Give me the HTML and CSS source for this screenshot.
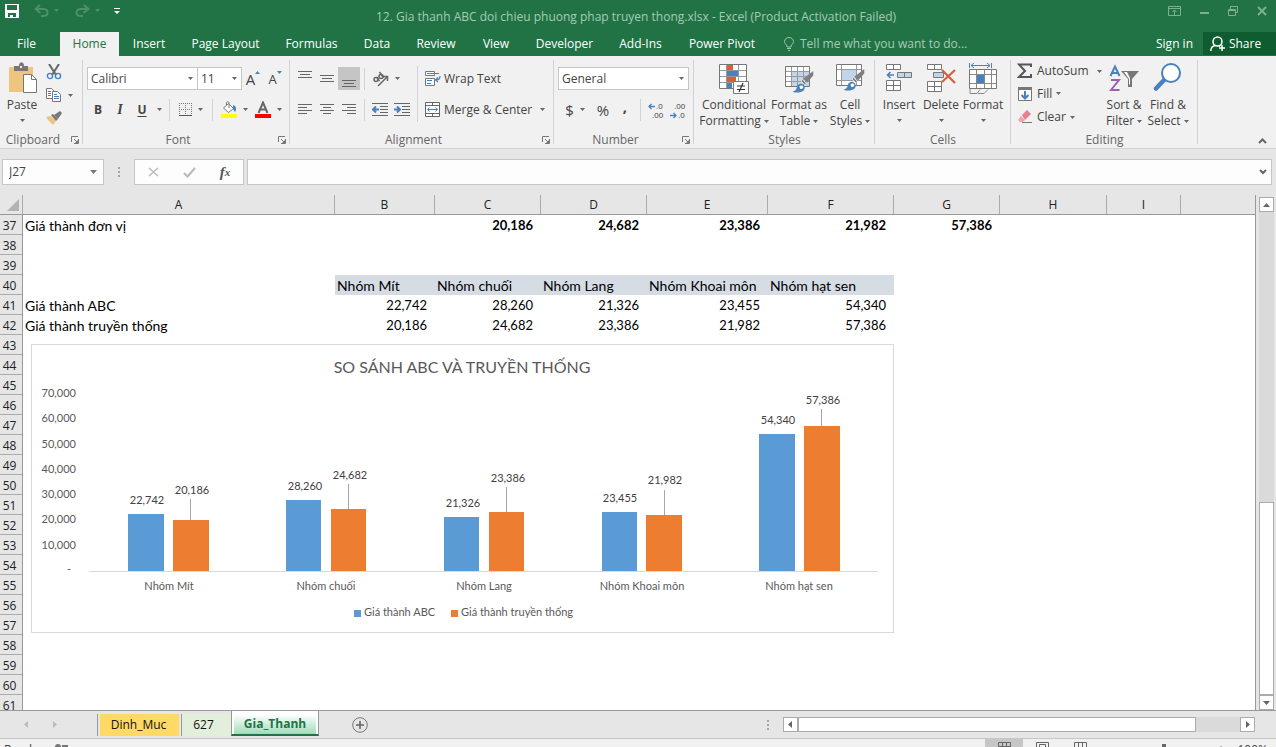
FILE: index.html
```html
<!DOCTYPE html>
<html lang="en">
<head>
<meta charset="utf-8">
<title>12. Gia thanh ABC doi chieu phuong phap truyen thong.xlsx - Excel</title>
<link rel="stylesheet" href="styles.css">
</head>
<body>
<svg class="defs" width="0" height="0" aria-hidden="true">
  <symbol id="caret" viewBox="0 0 5 3"><path d="M0 0h5L2.500 3z" fill="#666"/></symbol>
  <symbol id="launch" viewBox="0 0 8 8"><path d="M.5 6V.5H7M3 3l3 3M7.500 3v4.500H3" fill="none" stroke="#777"/><path d="M7 4v3H4z" fill="#777"/></symbol>
  <symbol id="painter" viewBox="0 0 30 30"><path d="M29 0v6l-8 9-5-5z" fill="#7f7f7f"/><path d="M15 11l5 5-2 2-5-5z" fill="#7f7f7f" stroke="#f1f1f1"/><path d="M2 27c5-1 5-4 6-7s6-5 9-1c3 5-2 9-7 9-3 0-6 0-8-1z" fill="#4a80bb"/><path d="M11 20c2-2 5-1 5 1s-2 3-4 2z" fill="#fff"/></symbol>
</svg>
<div class="app">
  <header class="titlebar">
    <div class="quick">
      <button class="plain" aria-label="Save"><svg width="14" height="14" viewBox="0 0 14 14"><path d="M0 0h14v14H0zM2 1v5h10V1zM3 9v4h2v-2h3v2h3V9z" fill="#fff" fill-rule="evenodd"/></svg></button>
      <button class="plain faded" aria-label="Undo"><svg width="26" height="14" viewBox="0 0 26 14"><path d="M6 1L1.500 5l5 4M2 5h7c6 0 6 7 0 7H7" fill="none" stroke="#4d8f69" stroke-width="2"/><path d="M20 5h5l-2.500 3z" fill="#4d8f69"/></svg></button>
      <button class="plain faded" aria-label="Redo"><svg width="26" height="14" viewBox="0 0 26 14"><path d="M9 1l4.500 4-5 4M13 5H6c-6 0-6 7 0 7h2" fill="none" stroke="#4d8f69" stroke-width="2"/><path d="M20 5h5l-2.500 3z" fill="#4d8f69"/></svg></button>
      <button class="plain" aria-label="Customize"><svg width="6" height="7" viewBox="0 0 6 7"><path d="M0 0h6v1H0zM0 3h6L3 6z" fill="#fff"/></svg></button>
    </div>
    <h1 class="title">12. Gia thanh ABC doi chieu phuong phap truyen thong.xlsx - Excel (Product Activation Failed)</h1>
    <div class="winbtns">
      <button class="plain" aria-label="Ribbon options"><svg width="13" height="10" viewBox="0 0 13 10"><path d="M.5.5h12v9H.5zM1 2.500h11M6.500 4v5M4.500 6l2-2 2 2" fill="none" stroke="#7db091"/></svg></button>
      <button class="plain" aria-label="Minimize"><svg width="9" height="10" viewBox="0 0 9 10"><path d="M0 6h9v2H0z" fill="#7db091"/></svg></button>
      <button class="plain" aria-label="Restore"><svg width="10" height="10" viewBox="0 0 10 10"><path d="M2.500 3V.5h7v6H7M.5 3.500h7v6h-7zM1 4.500h6" fill="none" stroke="#7db091"/></svg></button>
      <button class="plain" aria-label="Close"><svg width="10" height="10" viewBox="0 0 10 10"><path d="M1 1l8 8M9 1L1 9" stroke="#7db091" stroke-width="2"/></svg></button>
    </div>
  </header>

  <nav class="tabs">
    <button class="tab">File</button><button class="tab active">Home</button><button class="tab">Insert</button><button class="tab">Page Layout</button><button class="tab">Formulas</button><button class="tab">Data</button><button class="tab">Review</button><button class="tab">View</button><button class="tab">Developer</button><button class="tab">Add-Ins</button><button class="tab">Power Pivot</button>
    <button class="tell"><svg width="10" height="14" viewBox="0 0 10 14"><path d="M3 10V9C2 7 .5 6.500.5 4.500a4.500 4 0 0 1 9 0C9.500 6.500 8 7 7 9v1zM3 11.500h4M4 13.500h2" fill="none" stroke="#9cc5ab"/></svg>Tell me what you want to do...</button>
    <button class="signin">Sign in</button>
    <button class="share"><svg width="15" height="16" viewBox="0 0 15 16"><circle cx="7.500" cy="5.500" r="4.500" fill="none" stroke="#fff" stroke-width="1.500"/><path d="M.8 15c0-3 2-5 4.500-5.500M9 9.500l1 1M12 9v6M9 12h6" fill="none" stroke="#fff" stroke-width="1.500"/></svg>Share</button>
  </nav>

  <div class="ribbon">
    <section class="group clipboard">
      <div class="body">
        <button class="big"><svg width="30" height="32" viewBox="0 0 30 32"><path d="M2 5h24v25H2z" fill="#eec57f"/><path d="M7 4h5c0-5 5-5 5 0h4v5H7z" fill="#777"/><path d="M13 4h2v2h-2z" fill="#eee"/><path d="M16.500 12.500h8l5 5v13h-13z" fill="#fff" stroke="#777"/><path d="M24.500 12.500v5h5" fill="none" stroke="#777"/></svg><span>Paste</span><svg class="caret low"><use href="#caret"/></svg></button>
        <div class="clipcol">
          <button aria-label="Cut"><svg width="16" height="16" viewBox="0 0 16 16"><path d="M3 0l7 11M13 0L6 11" stroke="#666" stroke-width="2"/><circle cx="4" cy="12" r="2.600" fill="none" stroke="#4a80bb" stroke-width="1.400"/><circle cx="12" cy="12" r="2.600" fill="none" stroke="#4a80bb" stroke-width="1.400"/></svg></button>
          <button aria-label="Copy"><svg width="16" height="14" viewBox="0 0 16 14"><path d="M.5.5h5l3 3v7h-8z" fill="#fff" stroke="#777"/><path d="M2 3.500h3M2 5.500h3M2 7.500h3" stroke="#4a80bb"/><path d="M6.500 3.500h5l3 3v7h-8z" fill="#fff" stroke="#777"/><path d="M8 6.500h3M8 8.500h5M8 10.500h5" stroke="#4a80bb"/></svg><svg class="caret"><use href="#caret"/></svg></button>
          <button aria-label="Format Painter"><svg width="16" height="14" viewBox="0 0 16 14"><path d="M0 6l5-1 5 5-3 4-5-5z" fill="#eec57f"/><path d="M5 4l2-1 5 5-2 2z" fill="#777"/><path d="M8 4l6-4 2 2-4 6z" fill="#777"/></svg></button>
        </div>
      </div>
      <div class="foot"><span>Clipboard</span><button aria-label="Clipboard options"><svg width="8" height="8"><use href="#launch"/></svg></button></div>
    </section>

    <section class="group font">
      <div class="body rows">
        <div class="row">
          <label class="combo name"><select aria-label="Font"><option>Calibri</option></select><svg class="caret"><use href="#caret"/></svg></label>
          <label class="combo size"><select aria-label="Font size"><option>11</option></select><svg class="caret"><use href="#caret"/></svg></label>
          <button class="w22 letter" aria-label="Increase font size">A<svg width="5" height="3" viewBox="0 0 5 3"><path d="M0 3h5L2.500 0z" fill="#4a80bb"/></svg></button>
          <button class="w22 letter small" aria-label="Decrease font size">A<svg width="5" height="3" viewBox="0 0 5 3"><path d="M0 0h5L2.500 3z" fill="#4a80bb"/></svg></button>
        </div>
        <div class="row">
          <button class="w22 b">B</button><button class="w22 i">I</button><button class="w22 u">U</button><button class="w12" aria-label="Underline styles"><svg class="caret"><use href="#caret"/></svg></button>
          <i class="sep"></i>
          <button class="w34" aria-label="Borders"><svg width="13" height="13" viewBox="0 0 13 13"><path d="M.5 0v12M6.500 0v12M12.500 0v12M0 .5h13M0 6.500h13" stroke="#777" stroke-dasharray="1 1"/><path d="M0 12.500h13" stroke="#555"/></svg><svg class="caret"><use href="#caret"/></svg></button>
          <i class="sep"></i>
          <button class="w34" aria-label="Fill color"><svg width="16" height="17" viewBox="0 0 16 17"><path d="M7.500 2.500l5 5-5 4-5-4.500zM5.500 4V1.500C5.500.5 8 .5 8 1.500V7" fill="#fff" stroke="#777"/><path d="M12 4c3 1 4 4 2 7l-2-3z" fill="#4a80bb"/><path d="M0 13h16v4H0z" fill="#ff0"/></svg><svg class="caret"><use href="#caret"/></svg></button>
          <button class="w34" aria-label="Font color"><svg width="16" height="17" viewBox="0 0 16 17"><path d="M3.500 12L8 1.500 12.500 12M5 8.500h6" fill="none" stroke="#666" stroke-width="2"/><path d="M0 13h16v4H0z" fill="#f00"/></svg><svg class="caret"><use href="#caret"/></svg></button>
        </div>
      </div>
      <div class="foot"><span>Font</span><button aria-label="Font options"><svg width="8" height="8"><use href="#launch"/></svg></button></div>
    </section>

    <section class="group align">
      <div class="body">
        <div class="rows">
          <div class="row">
            <button class="w22 top" aria-label="Top align"><svg width="14" height="18" viewBox="0 0 14 18"><path d="M0 1.500h14M2 4.500h10M0 7.500h14" stroke="#666"/></svg></button><button class="w22" aria-label="Middle align"><svg width="14" height="18" viewBox="0 0 14 18"><path d="M0 5.500h14M2 8.500h10M0 11.500h14" stroke="#666"/></svg></button><button class="w22 pressed" aria-label="Bottom align"><svg width="14" height="18" viewBox="0 0 14 18"><path d="M0 10.500h14M2 13.500h10M0 16.500h14" stroke="#666"/></svg></button>
            <i class="sep"></i>
            <button class="w34" aria-label="Orientation"><svg width="17" height="16" viewBox="0 0 17 16"><g fill="none" stroke="#666" stroke-width="1.500"><circle cx="4" cy="8.500" r="2"/><path d="M4.500 6l3 4M7.500 1l4 5.500"/><circle cx="9" cy="5.500" r="2"/><path d="M6 15l9-9M11 5.500h4.500V10"/></g></svg><svg class="caret"><use href="#caret"/></svg></button>
          </div>
          <div class="row">
            <button class="w22" aria-label="Align left"><svg width="14" height="12" viewBox="0 0 14 12"><path d="M0 .5h14M0 3.500h9M0 6.500h14M0 9.500h9" stroke="#666"/></svg></button><button class="w22" aria-label="Center"><svg width="14" height="12" viewBox="0 0 14 12"><path d="M0 .5h14M3 3.500h8M0 6.500h14M3 9.500h8" stroke="#666"/></svg></button><button class="w22" aria-label="Align right"><svg width="14" height="12" viewBox="0 0 14 12"><path d="M0 .5h14M5 3.500h9M0 6.500h14M5 9.500h9" stroke="#666"/></svg></button>
            <i class="sep"></i>
            <button class="w22" aria-label="Decrease indent"><svg width="16" height="13" viewBox="0 0 16 13"><path d="M0 .5h16M8 3.500h8M8 6.500h8M8 9.500h8M0 12.500h16" stroke="#666"/><path d="M7 6.500H1.500M4 3.500l-3 3 3 3" fill="none" stroke="#4a80bb" stroke-width="2"/></svg></button><button class="w22" aria-label="Increase indent"><svg width="16" height="13" viewBox="0 0 16 13"><path d="M0 .5h16M8 3.500h8M8 6.500h8M8 9.500h8M0 12.500h16" stroke="#666"/><path d="M0 6.500h5.500M3 3.500l3 3-3 3" fill="none" stroke="#4a80bb" stroke-width="2"/></svg></button>
          </div>
        </div>
        <i class="sep tall"></i>
        <div class="rows">
          <div class="row"><button class="text"><svg width="16" height="15" viewBox="0 0 16 15"><path d="M.5.500h9v4h-9zM.5 7.500h9v7h-9z" fill="#fff" stroke="#777"/><path d="M2 2.500h12M2 9.500h5M2 12.500h4M15 5c0 3-1 4-4 4M13 6.500L10.500 9l2.500 2" fill="none" stroke="#4a80bb" stroke-width="1.200"/></svg>Wrap Text</button></div>
          <div class="row"><button class="text"><svg width="16" height="15" viewBox="0 0 16 15"><path d="M.5.5h14v14H.5zM0 3.500h15M0 11.500h15M7.500 0v3M7.500 12v3" fill="#fff" stroke="#666"/><path d="M3 7.500h9M4.500 5.500l-2 2 2 2M10.500 5.500l2 2-2 2" fill="none" stroke="#4a80bb"/></svg>Merge &amp; Center<svg class="caret"><use href="#caret"/></svg></button></div>
        </div>
      </div>
      <div class="foot"><span>Alignment</span><button aria-label="Alignment options"><svg width="8" height="8"><use href="#launch"/></svg></button></div>
    </section>

    <section class="group number">
      <div class="body rows">
        <div class="row"><label class="combo format"><select aria-label="Number format"><option>General</option></select><svg class="caret"><use href="#caret"/></svg></label></div>
        <div class="row">
          <button class="w34 sym">$<svg class="caret"><use href="#caret"/></svg></button><button class="w22 sym">%</button><button class="w22 sym comma">,</button>
          <i class="sep"></i>
          <button class="w22" aria-label="Increase decimal"><svg width="18" height="20" viewBox="0 0 18 20"><path d="M8 6.500H2M4.500 4L2 6.500 4.500 9" fill="none" stroke="#4a80bb" stroke-width="1.300"/><text x="9" y="9" class="dec">.0</text><text x="5" y="18" class="dec">.00</text></svg></button><button class="w22" aria-label="Decrease decimal"><svg width="18" height="20" viewBox="0 0 18 20"><path d="M1 15.500h6M4.500 13L7 15.500 4.500 18" fill="none" stroke="#4a80bb" stroke-width="1.300"/><text x="5" y="9" class="dec">.00</text><text x="9" y="18" class="dec">.0</text></svg></button>
        </div>
      </div>
      <div class="foot"><span>Number</span><button aria-label="Number options"><svg width="8" height="8"><use href="#launch"/></svg></button></div>
    </section>

    <section class="group styles">
      <div class="body">
        <button class="big"><svg width="30" height="32" viewBox="0 0 30 32"><path d="M.5 2.500h27v24H.5z" fill="#fff" stroke="#777"/><path d="M7.500 3v23M19.500 3v23M1 8.500h26M1 14.500h26M1 20.500h26" stroke="#999"/><path d="M8 3h6v5H8zM8 15h9v5H8z" fill="#d65f3c"/><path d="M8 9h11v5H8zM8 21h5v5H8z" fill="#4a80bb"/><path d="M14.500 19.500h15v12h-15z" fill="#fff" stroke="#777"/><path d="M18 24h8M18 27.500h8M24 21l-4 9" stroke="#333" stroke-width="1.200"/></svg><span>Conditional<br>Formatting<svg class="caret"><use href="#caret"/></svg></span></button>
        <button class="big"><svg width="30" height="32" viewBox="0 0 30 32"><path d="M1.500 4.500h24v20h-24z" fill="#fff" stroke="#777"/><path d="M8 10h17v14H8z" fill="#c1d4ea"/><path d="M7.500 5v19M13.500 5v19M19.500 5v19M2 9.500h23M2 14.500h23M2 19.500h23" stroke="#999"/><use href="#painter" x="7" y="9" width="23" height="23"/></svg><span>Format as<br>Table<svg class="caret"><use href="#caret"/></svg></span></button>
        <button class="big"><svg width="30" height="32" viewBox="0 0 30 32"><path d="M1.500 2.500h25v21h-25z" fill="#fff" stroke="#777"/><path d="M6.500 3v20M21.500 3v20M2 7.500h24M2 18.500h24" stroke="#999"/><path d="M7 8h14v10H7z" fill="#c1d4ea"/><use href="#painter" x="7" y="7" width="23" height="23"/></svg><span>Cell<br>Styles<svg class="caret"><use href="#caret"/></svg></span></button>
      </div>
      <div class="foot"><span>Styles</span></div>
    </section>

    <section class="group cells">
      <div class="body">
        <button class="big"><svg width="28" height="32" viewBox="0 0 28 32"><path d="M1.500 2.500h14v5h-14zM8.500 2v6M1.500 18.500h14v10h-14zM8.500 18v11M1 23.500h15" fill="#fff" stroke="#777"/><path d="M12.500 10.500h14v5h-14zM19.500 10v6" fill="#c1d4ea" stroke="#777"/><path d="M9 13H3M5.500 10L2.500 13l3 3" fill="none" stroke="#4a80bb" stroke-width="1.600"/></svg><span>Insert</span><svg class="caret low"><use href="#caret"/></svg></button>
        <button class="big"><svg width="30" height="32" viewBox="0 0 30 32"><path d="M1.500 2.500h14v5h-14zM8.500 2v6M1.500 19.500h14v10h-14zM8.500 19v11M1 24.500h15" fill="#fff" stroke="#777"/><path d="M7.500 10.500h10v5h-10z" fill="#c1d4ea" stroke="#777"/><path d="M16 8l13 13M29 8L16 20" stroke="#d65f3c" stroke-width="2.200"/></svg><span>Delete</span><svg class="caret low"><use href="#caret"/></svg></button>
        <button class="big"><svg width="28" height="32" viewBox="0 0 28 32"><path d="M.5 1v5M22.500 1v5M2 3.500h19M5 1L2 3.500 5 6M18 1l3 2.500L18 6" fill="none" stroke="#4a80bb"/><path d="M.5 7.500h27v19H.5z" fill="#fff" stroke="#777"/><path d="M7.500 8v18M15.500 8v18M22.500 8v18M1 12.500h26M1 21.500h26M1 27v4.500h7l3-4 M9 31.500h6l4-4" fill="none" stroke="#888"/><path d="M8 13h7v8H8z" fill="#4a80bb"/></svg><span>Format</span><svg class="caret low"><use href="#caret"/></svg></button>
      </div>
      <div class="foot"><span>Cells</span></div>
    </section>

    <section class="group editing">
      <div class="body">
        <div class="editcol">
          <button class="text"><svg width="16" height="16" viewBox="0 0 16 16"><path d="M14 4V1.500H2L8 8l-6 6h12V11" fill="none" stroke="#555" stroke-width="2"/></svg>AutoSum<svg class="caret far"><use href="#caret"/></svg></button>
          <button class="text"><svg width="16" height="16" viewBox="0 0 16 16"><path d="M1.500 2.500h13v12h-13z" fill="#fff" stroke="#777"/><path d="M1 1h14v3H1z" fill="#777"/><path d="M8 5v8M4.500 9L8 12.500 11.500 9" fill="none" stroke="#4a80bb" stroke-width="2"/></svg>Fill<svg class="caret"><use href="#caret"/></svg></button>
          <button class="text"><svg width="16" height="16" viewBox="0 0 16 16"><path d="M5 6l5-5 4 4-6 6z" fill="#e87f90"/><path d="M4 7l4 4-2 2H3L1 11z" fill="#eea5b0"/><path d="M5 13.500h10" stroke="#777"/></svg>Clear<svg class="caret"><use href="#caret"/></svg></button>
        </div>
        <button class="big"><svg width="30" height="32" viewBox="0 0 30 32"><path d="M1.500 14L6 4.500 10.500 14M3 11h6" fill="none" stroke="#4a80bb" stroke-width="2"/><path d="M2 18h8L2 28h8.500" fill="none" stroke="#9a5fb8" stroke-width="2"/><path d="M12 9h18l-7 8v8h-4v-8z" fill="#777"/><path d="M15 10h3l3 6v7l-1-1v-5z" fill="#fff"/></svg><span>Sort &amp;<br>Filter<svg class="caret"><use href="#caret"/></svg></span></button>
        <button class="big"><svg width="30" height="32" viewBox="0 0 30 32"><path d="M12 17L3 26.500" stroke="#4a80bb" stroke-width="4.500" stroke-linecap="round"/><circle cx="18" cy="11" r="9" fill="#fff" stroke="#4a80bb" stroke-width="2"/></svg><span>Find &amp;<br>Select<svg class="caret"><use href="#caret"/></svg></span></button>
      </div>
      <div class="foot"><span>Editing</span></div>
    </section>
    <button class="collapse" aria-label="Collapse ribbon"><svg width="9" height="6" viewBox="0 0 9 6"><path d="M1 5l3.500-3.500L8 5" fill="none" stroke="#666" stroke-width="2"/></svg></button>
  </div>

  <div class="formulabar">
    <label class="namebox"><input aria-label="Name box" value="J27"><svg width="7" height="4" viewBox="0 0 7 4"><path d="M0 0h7L3.500 4z" fill="#777"/></svg></label>
    <i class="dots"></i>
    <div class="fx">
      <button aria-label="Cancel"><svg width="11" height="10" viewBox="0 0 11 10"><path d="M1 1l9 8M10 1L1 9" stroke="#bbb" stroke-width="1.500"/></svg></button>
      <button aria-label="Enter"><svg width="13" height="11" viewBox="0 0 13 11"><path d="M1 6l3.500 3.500L12 1" fill="none" stroke="#bbb" stroke-width="2.200"/></svg></button>
      <button class="fn">f<small>x</small></button>
    </div>
    <label class="formula"><input aria-label="Formula"><svg width="8" height="6" viewBox="0 0 8 6"><path d="M1 1l3 3 3-3" fill="none" stroke="#666" stroke-width="2"/></svg></label>
  </div>

  <main class="sheet">
    <div class="pane">
      <table class="grid">
        <colgroup><col class="c0"><col class="ca"><col class="cb"><col class="cc"><col class="cc"><col class="ce"><col class="cf"><col class="cc"><col class="ch"><col class="ci"><col></colgroup>
        <thead><tr><th class="corner"><svg width="12" height="12" viewBox="0 0 12 12"><path d="M12 0v12H0z" fill="#b3b3b3"/></svg></th><th>A</th><th>B</th><th>C</th><th>D</th><th>E</th><th>F</th><th>G</th><th>H</th><th>I</th><th></th></tr></thead>
        <tbody>
          <tr class="total"><th>37</th><td>Giá thành đơn vị</td><td></td><td>20,186</td><td>24,682</td><td>23,386</td><td>21,982</td><td>57,386</td><td></td><td></td><td></td></tr>
          <tr><th>38</th><td colspan="10"></td></tr>
          <tr><th>39</th><td colspan="10"></td></tr>
          <tr class="names"><th>40</th><td></td><td>Nhóm Mít</td><td>Nhóm chuối</td><td>Nhóm Lang</td><td>Nhóm Khoai môn</td><td>Nhóm hạt sen</td><td colspan="4"></td></tr>
          <tr><th>41</th><td>Giá thành ABC</td><td>22,742</td><td>28,260</td><td>21,326</td><td>23,455</td><td>54,340</td><td colspan="4"></td></tr>
          <tr><th>42</th><td>Giá thành truyền thống</td><td>20,186</td><td>24,682</td><td>23,386</td><td>21,982</td><td>57,386</td><td colspan="4"></td></tr>
          <tr><th>43</th><td colspan="10"></td></tr>
          <tr><th>44</th><td colspan="10"></td></tr>
          <tr><th>45</th><td colspan="10"></td></tr>
          <tr><th>46</th><td colspan="10"></td></tr>
          <tr><th>47</th><td colspan="10"></td></tr>
          <tr><th>48</th><td colspan="10"></td></tr>
          <tr><th>49</th><td colspan="10"></td></tr>
          <tr><th>50</th><td colspan="10"></td></tr>
          <tr><th>51</th><td colspan="10"></td></tr>
          <tr><th>52</th><td colspan="10"></td></tr>
          <tr><th>53</th><td colspan="10"></td></tr>
          <tr><th>54</th><td colspan="10"></td></tr>
          <tr><th>55</th><td colspan="10"></td></tr>
          <tr><th>56</th><td colspan="10"></td></tr>
          <tr><th>57</th><td colspan="10"></td></tr>
          <tr><th>58</th><td colspan="10"></td></tr>
          <tr><th>59</th><td colspan="10"></td></tr>
          <tr><th>60</th><td colspan="10"></td></tr>
          <tr><th>61</th><td colspan="10"></td></tr>
        </tbody>
      </table>
      <svg class="chart" width="863" height="289" viewBox="0 0 863 289" role="img" aria-label="SO SÁNH ABC VÀ TRUYỀN THỐNG">
        <rect x=".5" y=".5" width="862" height="288" fill="#fff" stroke="#d9d9d9"/>
        <text class="ctitle" x="431" y="29">SO SÁNH ABC VÀ TRUYỀN THỐNG</text>
        <g class="axis">
          <text x="45" y="53">70,000</text><text x="45" y="78">60,000</text><text x="45" y="104">50,000</text><text x="45" y="129">40,000</text><text x="45" y="154">30,000</text><text x="45" y="179">20,000</text><text x="45" y="205">10,000</text><text x="40" y="229">-</text>
        </g>
        <path d="M58 227.500h789" stroke="#d9d9d9"/>
        <g fill="#5b9bd5"><rect x="97" y="170" width="36" height="57"/><rect x="255" y="156" width="35" height="71"/><rect x="413" y="173" width="35" height="54"/><rect x="571" y="168" width="35" height="59"/><rect x="728" y="90" width="36" height="137"/></g>
        <g fill="#ed7d31"><rect x="142" y="176" width="36" height="51"/><rect x="300" y="165" width="35" height="62"/><rect x="458" y="168" width="35" height="59"/><rect x="615" y="171" width="36" height="56"/><rect x="773" y="82" width="36" height="145"/></g>
        <path d="M159.500 155v21M317.500 140v25M475.500 143v25M633.500 146v25M790.500 65v17" stroke="#a6a6a6"/>
        <g class="val">
          <text x="116" y="160">22,742</text><text x="161" y="150">20,186</text><text x="274" y="146">28,260</text><text x="319" y="135">24,682</text><text x="432" y="163">21,326</text><text x="477" y="138">23,386</text><text x="589" y="158">23,455</text><text x="634" y="140">21,982</text><text x="747" y="80">54,340</text><text x="792" y="60">57,386</text>
        </g>
        <g class="cat">
          <text x="138" y="246">Nhóm Mít</text><text x="295" y="246">Nhóm chuối</text><text x="453" y="246">Nhóm Lang</text><text x="611" y="246">Nhóm Khoai môn</text><text x="768" y="246">Nhóm hạt sen</text>
        </g>
        <path d="M323 266h7v7h-7z" fill="#5b9bd5"/><path d="M420 266h7v7h-7z" fill="#ed7d31"/>
        <g class="legend"><text x="333" y="272">Giá thành ABC</text><text x="430" y="272">Giá thành truyền thống</text></g>
      </svg>
    </div>
    <div class="vscroll">
      <button aria-label="Scroll up"><svg width="7" height="4" viewBox="0 0 7 4"><path d="M0 4h7L3.500 0z" fill="#666"/></svg></button>
      <div class="track"><div class="thumb"></div></div>
      <button aria-label="Scroll down"><svg width="7" height="4" viewBox="0 0 7 4"><path d="M0 0h7L3.500 4z" fill="#666"/></svg></button>
    </div>
  </main>

  <div class="sheetbar">
    <div class="navarrows">
      <button class="plain" aria-label="Previous sheet"><svg width="4" height="7" viewBox="0 0 4 7"><path d="M4 0v7L0 3.500z" fill="#bbb"/></svg></button>
      <button class="plain" aria-label="Next sheet"><svg width="4" height="7" viewBox="0 0 4 7"><path d="M0 0v7l4-3.500z" fill="#bbb"/></svg></button>
    </div>
    <button class="st yellow">Dinh_Muc</button>
    <button class="st pale">627</button>
    <button class="st current">Gia_Thanh</button>
    <button class="plain add" aria-label="New sheet"><svg width="16" height="16" viewBox="0 0 16 16"><circle cx="8" cy="8" r="7.300" fill="none" stroke="#777"/><path d="M8 4v8M4 8h8" stroke="#666" stroke-width="1.600"/></svg></button>
    <i class="dots split"></i>
    <div class="hscroll">
      <button aria-label="Scroll left"><svg width="4" height="7" viewBox="0 0 4 7"><path d="M4 0v7L0 3.500z" fill="#666"/></svg></button>
      <div class="track"><div class="thumb"></div></div>
      <button aria-label="Scroll right"><svg width="4" height="7" viewBox="0 0 4 7"><path d="M0 0v7l4-3.500z" fill="#666"/></svg></button>
    </div>
  </div>

  <footer class="status">
    <span class="ready">Ready</span>
    <svg width="13" height="13" viewBox="0 0 13 13"><circle cx="3" cy="3" r="3" fill="#777"/><path d="M7.500 1.500h5v9h-10V7" fill="none" stroke="#777"/><path d="M7 1h6v2H7z" fill="#777"/></svg>
    <div class="views">
      <button class="on" aria-label="Normal view"><svg width="13" height="12" viewBox="0 0 13 12"><path d="M.5.5h12v11H.5zM0 4.500h13M4.500 0v12M8.500 0v12M0 8h13" fill="none" stroke="#666"/></svg></button>
      <button aria-label="Page layout view"><svg width="13" height="12" viewBox="0 0 13 12"><path d="M.5.5h12v11H.5zM3.500 2.500h6v9h-6zM5 5.500h3" fill="none" stroke="#666"/></svg></button>
      <button aria-label="Page break view"><svg width="13" height="12" viewBox="0 0 13 12"><path d="M.5.5h12v11H.5zM4.500 0v7M8.500 0v7M0 6.500h13" fill="none" stroke="#666"/></svg></button>
    </div>
    <svg class="zoombar" width="130" height="12" viewBox="0 0 130 12"><path d="M0 5.500h8M16 5.500h94M118 5.500h8M122 2v8" stroke="#666"/><path d="M63 0h4v12h-4z" fill="#666"/></svg>
    <span>100%</span>
  </footer>
</div>
</body>
</html>
```
FILE: styles.css
```css
* { box-sizing: border-box; }
html, body { margin: 0; height: 100%; overflow: hidden; }
body { font: 12px/16px "Open Sans", "Noto Sans", sans-serif; color: #444; background: #e6e6e6; }
button, input, select { font: inherit; color: inherit; background: none; border: 0; padding: 0; margin: 0; white-space: nowrap; }
button { display: flex; align-items: center; justify-content: center; }
svg { display: block; flex: none; }
.defs { position: absolute; }
.caret { width: 5px; height: 3px; }
/* the status bar runs past the bottom edge of the window */
.app { height: calc(100% + 14px); display: flex; flex-direction: column; }

.titlebar { flex: none; height: 32px; display: flex; align-items: flex-start; background: #217346; color: #a6cbb4; }
.quick { flex: 1; display: flex; align-items: center; gap: 15px; padding: 4px 0 0 5px; }
.quick button:last-child { margin-left: -2px; }
.title { margin: 0; padding-top: 9px; font-size: 12px; font-weight: 400; line-height: 16px; }
.winbtns { flex: 1; display: flex; justify-content: flex-end; align-items: center; gap: 19px; padding: 6px 9px 0 0; }

.tabs { flex: none; height: 24px; display: grid; grid-template-columns: 53px 66px 60px 93px 79px 52px 66px 54px 83px 69px 94px 1fr auto auto; background: #217346; color: #fff; }
.tab.active { background: #f1f1f1; color: #217346; margin-left: 7px; }
.tell { justify-content: flex-start; gap: 6px; padding-left: 15px; color: #a6cbb4; }
.signin { padding: 0 10px; }
.share { width: 73px; height: 23px; gap: 4px; background: #0e5c2f; padding-right: 8px; }

.ribbon { flex: none; height: 93px; display: flex; background: #f1f1f1; border-bottom: 1px solid #d2d2d2; }
.group { flex: none; position: relative; display: flex; flex-direction: column; padding: 4px 4px 0; }
.group::after { content: ""; position: absolute; right: 0; top: 4px; bottom: 4px; width: 1px; background: #d2d2d2; }
.clipboard { width: 83px; }
.font { width: 207px; }
.align { width: 264px; }
.number { width: 140px; }
.styles { width: 181px; }
.cells { width: 136px; }
.editing { width: 187px; }
.body { flex: none; height: 72px; display: flex; }
.foot { display: flex; align-items: center; justify-content: center; height: 16px; color: #666; }
.foot span { flex: 1; text-align: center; }
.foot span:not(:last-child) { padding-right: 8px; }
.foot button { width: 9px; }

.big { flex-direction: column; justify-content: flex-start; gap: 3px; padding-top: 2px; line-height: 16px; }
.big .caret { display: inline-block; vertical-align: 2px; margin-left: 3px; }
.big .low { margin: 3px 0 0; }
.clipboard .big { width: 36px; }
.clipcol { display: grid; grid-template-rows: 24px 22px 24px; padding-left: 6px; }
.clipcol button { justify-content: flex-start; gap: 6px; }
.styles .body { padding-left: 2px; gap: 2px; }
.styles .big:nth-child(1) { width: 68px; }
.styles .big:nth-child(2) { width: 58px; }
.styles .big:nth-child(3) { width: 40px; }
.cells .body { margin-left: -1px; }
.cells .big { width: 42px; }

.rows { display: flex; flex-direction: column; gap: 8px; padding-top: 7px; }
.row { display: flex; align-items: center; height: 23px; }
.sep { width: 1px; height: 22px; margin: 0 4px; background: #d2d2d2; }
.sep.tall { height: 56px; margin-top: 6px; }
.w12 { width: 12px; height: 22px; }
.w22 { width: 22px; height: 23px; }
.w34 { width: 34px; height: 22px; gap: 6px; }
.pressed { background: #c5c5c5; }
.combo { position: relative; display: flex; align-items: center; height: 23px; background: #fff; border: 1px solid #c6c6c6; }
.combo select { appearance: none; flex: 1; width: 100%; padding: 0 3px; }
.combo .caret { position: absolute; right: 4px; top: 9px; pointer-events: none; }
.combo.name { width: 111px; }
.combo.size { width: 44px; border-left: 0; }
.combo.format { width: 131px; }
.letter { font-size: 15px; }
.letter svg { margin-bottom: 12px; }
.letter.small { font-size: 13px; }
.b { font-weight: 700; }
.i { font: italic 700 14px "Liberation Serif", serif; }
.u { font-weight: 700; text-decoration: underline; text-underline-offset: 2px; }
.text { gap: 3px; padding-left: 3px; }
.text .caret { margin-left: 5px; }
.sym { font-size: 15px; }
.comma { font-weight: 700; padding-bottom: 8px; }
.dec { font: 8px "Liberation Sans", sans-serif; fill: #444; }
.editcol { width: 88px; display: grid; grid-template-rows: 22px 23px 24px; }
.editing .body { margin-left: -1px; }
.editcol .text { justify-content: flex-start; gap: 4px; }
.editcol .caret { margin-left: 0; }
.editcol .far { margin-left: auto; }
.editing .big { width: 44px; }
.collapse { margin: 80px 9px 0 auto; height: 10px; }

.formulabar { flex: none; display: flex; align-items: center; height: 46px; padding: 0 4px 0 2px; }
.namebox, .fx, .formula { display: flex; align-items: center; height: 26px; background: #fdfdfd; border: 1px solid #c6c6c6; }
.namebox { width: 102px; padding: 0 6px; }
.namebox input { flex: 1; min-width: 0; }
.dots { width: 2px; height: 10px; margin: 0 14px; background: repeating-linear-gradient(#a6a6a6 0 2px, transparent 2px 4px); }
.fx { width: 110px; margin-right: 3px; }
.fx button { flex: 1; }
.fn { font: italic 700 15px "Liberation Serif", serif; color: #555; }
.fn small { font-size: 11px; }
.formula { flex: 1; padding-right: 4px; }
.formula input { flex: 1; }

.sheet { flex: 1; min-height: 0; display: flex; border-bottom: 1px solid #999; }
.pane { flex: 1; min-width: 0; position: relative; overflow: hidden; background: #fff; border-right: 1px solid #999; }
.grid { width: 100%; table-layout: fixed; border-collapse: separate; border-spacing: 0; font: 13px/19px Lato, "Open Sans", sans-serif; color: #000; }
.grid th { padding: 0; font-weight: 400; height: 20px; background: #e6e6e6; }
.grid thead th { font: 12px/19px "Open Sans", sans-serif; color: #222; border-right: 1px solid #ababab; border-bottom: 1px solid #999; }
.grid thead th:last-child { border-right: 0; }
.grid .corner svg { margin: 1px 3px 0 7px; }
.grid tbody th { font: 12px/17px "Open Sans", sans-serif; color: #222; padding: 2px 3px 0 0; border-right: 1px solid #999; border-bottom: 1px solid #ababab; }
.grid td { padding: 0 8px 0 3px; height: 20px; text-align: right; white-space: nowrap; }
.grid td:nth-child(2), .grid .names td { text-align: left; padding: 0 0 0 2px; font-size: 14px; }
.names td:nth-child(n+3):nth-child(-n+7) { background: #d6dce4; }
.total td:nth-child(n+3) { font-weight: 700; }
.c0 { width: 23px; }
.ca { width: 312px; }
.cb { width: 100px; }
.cc { width: 106px; }
.ce { width: 121px; }
.cf { width: 126px; }
.ch { width: 107px; }
.ci { width: 74px; }

.chart { position: absolute; left: 31px; top: 149px; font-family: Lato, "Open Sans", sans-serif; font-size: 11px; fill: #595959; }
.ctitle { font-size: 16px; text-anchor: middle; }
.axis text { text-anchor: end; }
.val text { text-anchor: middle; fill: #404040; }
.cat text { text-anchor: middle; }

.vscroll { flex: none; width: 20px; padding: 2px 2px 0 3px; display: flex; flex-direction: column; }
.vscroll button, .hscroll button { flex: none; width: 15px; height: 15px; background: #fff; border: 1px solid #ababab; }
.vscroll .track { flex: 1; display: flex; flex-direction: column; justify-content: flex-end; background: #dadada; }
.vscroll .thumb { height: 40%; background: #fff; border: 1px solid #ababab; }

.sheetbar { flex: none; height: 28px; display: flex; align-items: center; border-bottom: 1px solid #c6c6c6; }
.navarrows { width: 97px; display: flex; gap: 25px; padding-left: 24px; }
.st { height: 22px; color: #111; }
.yellow { width: 84px; background: #ffd966; border-left: 1px solid #999; border-right: 2px solid #e6e6e6; box-shadow: inset 2px 0 #e6e6e6; }
.pale { width: 50px; padding-right: 6px; background: #e2efda; border-left: 1px solid #999; }
.current { width: 88px; height: 25px; padding-top: 2px; align-self: flex-start; font-weight: 700; color: #217346; background: linear-gradient(#fff 15%, #9fdcbb); border: solid #999; border-width: 0 1px; border-bottom: 2px solid #217346; box-shadow: inset 2px 0 #fff, inset -2px 0 #fff; }
.add { margin-left: 33px; }
.split { margin-left: auto; }
.hscroll { width: 37%; margin-right: 21px; display: flex; }
.hscroll .track { flex: 1; background: #dadada; }
.hscroll .thumb { width: 90%; height: 15px; background: #fff; border: 1px solid #ababab; }

.status { flex: none; height: 22px; display: flex; align-items: center; padding: 0 8px 0 4px; background: #f1f1f1; }
.ready { width: 51px; }
.views { margin-left: auto; display: flex; height: 22px; }
.views button { width: 38px; padding-bottom: 4px; }
.views .on { background: #c6c6c6; }
.zoombar { margin-right: 8px; }
```
